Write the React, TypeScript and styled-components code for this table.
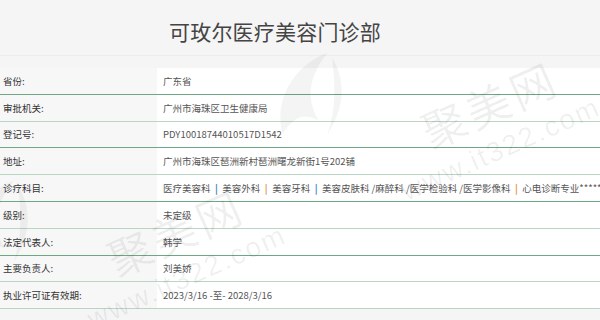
import styled, { createGlobalStyle } from 'styled-components'

type RowType = {
  label: string
  value: string | string[]
}

const GlobalStyle = createGlobalStyle`
  html, body {
    margin: 0;
    padding: 0;
    background: #f5f5f5;
    font-family: 'Noto Sans CJK SC', 'Noto Sans', sans-serif;
  }
`

const rows: RowType[] = [
  { label: '省份:', value: '广东省' },
  { label: '审批机关:', value: '广州市海珠区卫生健康局' },
  { label: '登记号:', value: 'PDY10018744010517D1542' },
  { label: '地址:', value: '广州市海珠区琶洲新村琶洲曙龙新街1号202铺' },
  {
    label: '诊疗科目:',
    value: ['医疗美容科', '美容外科', '美容牙科', '美容皮肤科 /麻醉科 /医学检验科 /医学影像科', '心电诊断专业*****'],
  },
  { label: '级别:', value: '未定级' },
  { label: '法定代表人:', value: '韩学' },
  { label: '主要负责人:', value: '刘美娇' },
  { label: '执业许可证有效期:', value: '2023/3/16 -至- 2028/3/16' },
]

// watermark tiles, centre of each tile in page pixels
const tiles = [
  { x: 497, y: 121 },
  { x: 183, y: 249 },
]

const Swirl = ({ size }: { size: number }) => (
  <svg width={size} height={size} viewBox='0 0 100 100'>
    <path
      d='M20 95 C10 60 30 20 70 5 C50 30 45 55 60 80 C40 70 30 80 20 95 Z M75 10 C90 35 90 65 70 95 C80 65 78 40 75 10 Z'
      fill='rgba(0,0,0,0.045)'
    />
  </svg>
)

const App = () => {
  const renderValue = (value: string | string[]) => {
    if (typeof value === 'string') return value
    return value.map((d, i) => (
      <span key={d}>
        {i > 0 && <Pipe $tone={i % 2 === 0 ? 'orange' : 'blue'}>|</Pipe>}
        {d}
      </span>
    ))
  }

  return (
    <Page>
      <GlobalStyle />
      <Header>
        <Title>可玫尔医疗美容门诊部</Title>
      </Header>
      <Table>
        {rows.map((row, i) => (
          <Row key={row.label} $strong={i % 2 === 0 && i < rows.length - 1}>
            <Label>{row.label}</Label>
            <Value>{renderValue(row.value)}</Value>
          </Row>
        ))}
      </Table>
      {tiles.map((t) => (
        <Tile key={t.x} style={{ left: t.x, top: t.y }}>
          <LogoSpot>
            <Swirl size={90} />
          </LogoSpot>
          <Mark>聚美网</Mark>
          <Site>www.it322.com</Site>
        </Tile>
      ))}
    </Page>
  )
}

export default App

const Page = styled.div`
  position: relative;
  width: 600px;
  height: 320px;
  overflow: hidden;
  background: #f5f5f5;
`
const Header = styled.div`
  height: 55px;
  border-bottom: 1px solid #ececec;
  display: flex;
  align-items: center;
  justify-content: center;
  padding-right: 50px;
  margin-bottom: 12px;
`
const Title = styled.h1`
  margin: 0;
  padding-top: 6px;
  font-size: 21px;
  font-weight: 400;
  color: #444;
  letter-spacing: 0.2px;
`
const Table = styled.div`
  display: flex;
  flex-direction: column;
`
const Row = styled.div<{ $strong: boolean }>`
  display: grid;
  grid-template-columns: 157px 1fr;
  height: 25.8px;
  border-bottom: ${(props) => (props.$strong ? '1.4px solid #6fa784' : '1.4px solid #b9d6c3')};
`
const Label = styled.div`
  display: flex;
  align-items: center;
  padding-left: 3px;
  font-size: 9.5px;
  color: #333;
  background: #f7f7f7;
`
const Value = styled.div`
  display: flex;
  align-items: center;
  padding-left: 6px;
  font-size: 9.5px;
  color: #555;
  background: #fff;
  white-space: nowrap;
  overflow: hidden;
`
const Pipe = styled.span<{ $tone: 'blue' | 'orange' }>`
  margin: 0 4.5px;
  font-weight: 700;
  color: ${(props) => (props.$tone === 'blue' ? '#3a7fc4' : '#e0953a')};
`
const Tile = styled.div`
  position: absolute;
  display: flex;
  flex-direction: column;
  align-items: center;
  gap: 11px;
  transform: translate(-50%, -50%) rotate(-24deg);
  pointer-events: none;
  white-space: nowrap;
  color: rgba(0, 0, 0, 0.065);
  line-height: 1;
`
const LogoSpot = styled.div`
  position: absolute;
  left: -90px;
  top: -105px;
  transform: rotate(24deg);
`
const Mark = styled.div`
  font-size: 44px;
  letter-spacing: 4px;
  font-family: 'Noto Sans CJK SC', sans-serif;
`
const Site = styled.div`
  margin-right: 16px;
  font-size: 28px;
  letter-spacing: 2px;
  font-family: 'Liberation Sans', sans-serif;
`
